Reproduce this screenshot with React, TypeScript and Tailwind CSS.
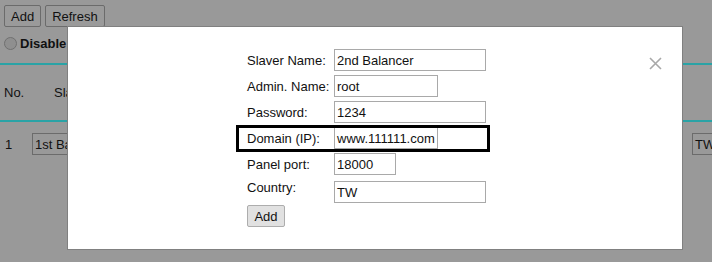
function FormRow({ label, value, width }: { label: string; value: string; width: string }) {
    return (
        <div className="flex items-center h-[22px]">
            <span className="w-[87px] shrink-0">{label}</span>
            <div className={`${width} h-[22px] border border-[#a9a9a9] pl-[2px] flex items-center`}>{value}</div>
        </div>
    );
}

function App() {
    return (
        <div
            className="relative w-[712px] h-[262px] overflow-hidden bg-[#999999] text-[13px] leading-[15px] text-[#111]"
            style={{ fontFamily: '"Liberation Sans", Arial, sans-serif' }}
        >
            {/* page behind the overlay */}
            <div className="flex gap-[4px] pt-[5px] pl-[4px]">
                <button className="h-[22px] px-[6px] border border-[#6b6b6b] rounded-[2px] bg-[#9a9a9a]">Add</button>
                <button className="h-[22px] px-[6px] border border-[#6b6b6b] rounded-[2px] bg-[#9a9a9a]">Refresh</button>
            </div>
            <div className="flex items-center gap-[3px] mt-[10px] pl-[4px] h-[13px]">
                <span className="w-[13px] h-[13px] rounded-full border border-[#707070] bg-[#8f8f8f]"></span>
                <span className="font-bold">Disable</span>
            </div>
            <div className="mt-[13px] h-[2px] bg-[#2aa3a6]"></div>
            <div className="flex items-center h-[55px] pl-[4px]">
                <span className="w-[50px]">No.</span>
                <span>Slaver</span>
            </div>
            <div className="h-[2px] bg-[#2aa3a6]"></div>
            <div className="flex items-center mt-[11px] h-[22px]">
                <span className="w-[32px] shrink-0 pl-[5px]">1</span>
                <div className="w-[150px] shrink-0 h-[22px] border border-[#6b6b6b] pl-[2px] flex items-center">1st Balancer</div>
                <div className="ml-[510px] w-[60px] shrink-0 h-[22px] border border-[#6b6b6b] pl-[2px] flex items-center">TW</div>
            </div>

            {/* modal */}
            <div className="absolute left-[67px] top-[26px] w-[616px] h-[224px] bg-white border border-[#808080]">
                <svg className="absolute left-[581px] top-[30px]" width="13" height="13" viewBox="0 0 13 13">
                    <path d="M1 1 L12 12 M12 1 L1 12" stroke="#a8a8a8" strokeWidth="1.6" />
                </svg>
                <div className="flex flex-col pl-[179px] pt-[22px] gap-[4px]">
                    <FormRow label="Slaver Name:" value="2nd Balancer" width="w-[152px]" />
                    <FormRow label="Admin. Name:" value="root" width="w-[104px]" />
                    <FormRow label="Password:" value="1234" width="w-[152px]" />
                    <FormRow label="Domain (IP):" value="www.111111.com" width="w-[104px]" />
                    <FormRow label="Panel port:" value="18000" width="w-[62px]" />
                    <div className="flex items-start h-[22px] mt-[2px]">
                        <span className="w-[87px] shrink-0 -mt-[1px]">Country:</span>
                        <div className="w-[152px] h-[22px] border border-[#a9a9a9] pl-[2px] pt-[3px]">TW</div>
                    </div>
                    <div className="-mt-[2px]">
                        <button className="h-[22px] w-[38px] border border-[#adadad] rounded-[2px] bg-[#e1e1e1]">Add</button>
                    </div>
                </div>
                <div className="absolute left-[168px] top-[98px] w-[254px] h-[27px] border-[3px] border-black"></div>
            </div>
        </div>
    );
}

export default App;
